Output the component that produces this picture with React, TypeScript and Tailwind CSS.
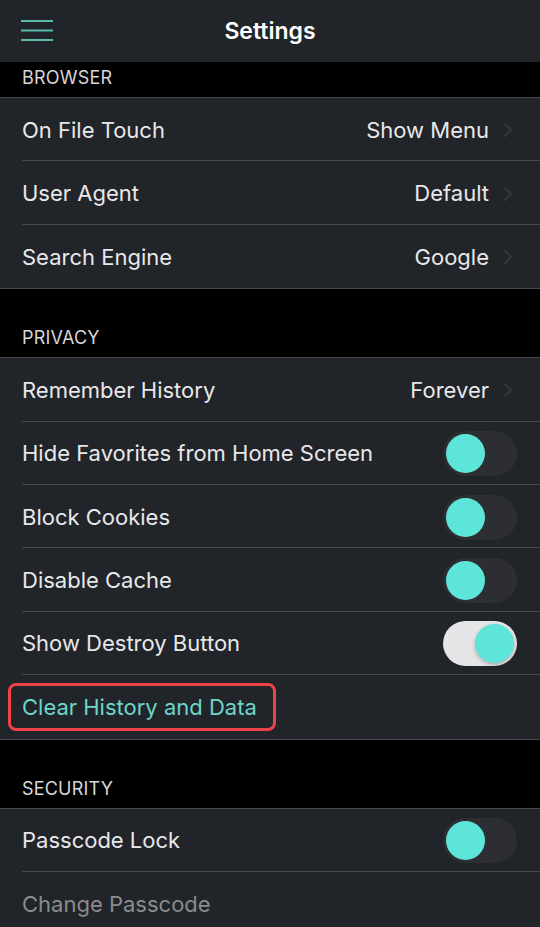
import React from "react";

function Chevron() {
  return (
    <svg width="10" height="16" viewBox="0 0 10 16" className="ml-[14px] shrink-0">
      <path d="M2 2 L8 8 L2 14" fill="none" stroke="#34373c" strokeWidth="2" strokeLinecap="round" strokeLinejoin="round" />
    </svg>
  );
}

function Toggle({ on }: { on?: boolean }) {
  if (on) {
    return (
      <div className="w-[74px] h-[45px] rounded-full bg-[#e6e6e8] flex items-center justify-end pr-[3px] shrink-0">
        <div className="w-[39px] h-[39px] rounded-full bg-[#5ce5d8] shadow-[0_2px_4px_rgba(0,0,0,0.25)]" />
      </div>
    );
  }
  return (
    <div className="w-[74px] h-[45px] rounded-full bg-[#2c2e33] flex items-center pl-[3px] shrink-0">
      <div className="w-[39px] h-[39px] rounded-full bg-[#5ce5d8]" />
    </div>
  );
}

type RowProps = {
  label: string;
  value?: string;
  toggle?: "on" | "off";
  last?: boolean;
  labelClass?: string;
  children?: React.ReactNode;
};

function Row({ label, value, toggle, last, labelClass, children }: RowProps) {
  return (
    <div className="relative h-[63.4px] pl-[22px] bg-[#212429] flex">
      <div
        className={
          "flex-1 flex items-center justify-between pt-[2px] " +
          (toggle ? "pr-[23px] " : "pr-[27px] ") +
          (last ? "" : "border-b border-[#45484d]")
        }
      >
        <span className={labelClass ?? "text-[22px] text-[#e8e8ea]"}>{label}</span>
        {value && (
          <div className="flex items-center">
            <span className="text-[22px] text-[#e8e8ea]">{value}</span>
            <Chevron />
          </div>
        )}
        {toggle && <Toggle on={toggle === "on"} />}
      </div>
      {children}
    </div>
  );
}

function SectionHeader({ title, tall }: { title: string; tall?: boolean }) {
  return (
    <div
      className={
        "bg-black flex items-end pl-[22px] pb-[8px] border-b border-[#45484d] " +
        (tall ? "h-[69px]" : "h-[36px]")
      }
    >
      <span className="text-[18px] leading-[22px] text-[#d6d6d8] tracking-[0.2px]">{title}</span>
    </div>
  );
}

export default function App() {
  return (
    <div
      className="w-[540px] h-[927px] overflow-hidden bg-black"
      style={{ fontFamily: "Inter, 'Noto Sans', sans-serif" }}
    >
      <div className="h-[62px] bg-[#212429] grid grid-cols-[1fr_auto_1fr] items-center">
        <div className="pl-[21px]">
          <svg width="32" height="24" viewBox="0 0 32 24">
            <rect x="0" y="1" width="32" height="2" fill="#5bb9ae" />
            <rect x="0" y="10.5" width="32" height="2" fill="#5bb9ae" />
            <rect x="0" y="20" width="32" height="2" fill="#5bb9ae" />
          </svg>
        </div>
        <div className="text-[23px] font-semibold text-white">Settings</div>
        <div />
      </div>

      <SectionHeader title="BROWSER" />
      <div className="border-b border-[#45484d]">
        <Row label="On File Touch" value="Show Menu" />
        <Row label="User Agent" value="Default" />
        <Row label="Search Engine" value="Google" last />
      </div>

      <SectionHeader title="PRIVACY" tall />
      <div className="border-b border-[#45484d]">
        <Row label="Remember History" value="Forever" />
        <Row label="Hide Favorites from Home Screen" toggle="off" />
        <Row label="Block Cookies" toggle="off" />
        <Row label="Disable Cache" toggle="off" />
        <Row label="Show Destroy Button" toggle="on" />
        <Row label="Clear History and Data" last labelClass="text-[22px] text-[#6cd6ca]">
          <div className="absolute left-[8px] top-[8px] w-[268px] h-[48px] border-[3px] border-[#ef4447] rounded-[8px] pointer-events-none" />
        </Row>
      </div>

      <SectionHeader title="SECURITY" tall />
      <div>
        <Row label="Passcode Lock" toggle="off" />
        <Row label="Change Passcode" last labelClass="text-[22px] text-[#8a8b8f]" />
      </div>
    </div>
  );
}
